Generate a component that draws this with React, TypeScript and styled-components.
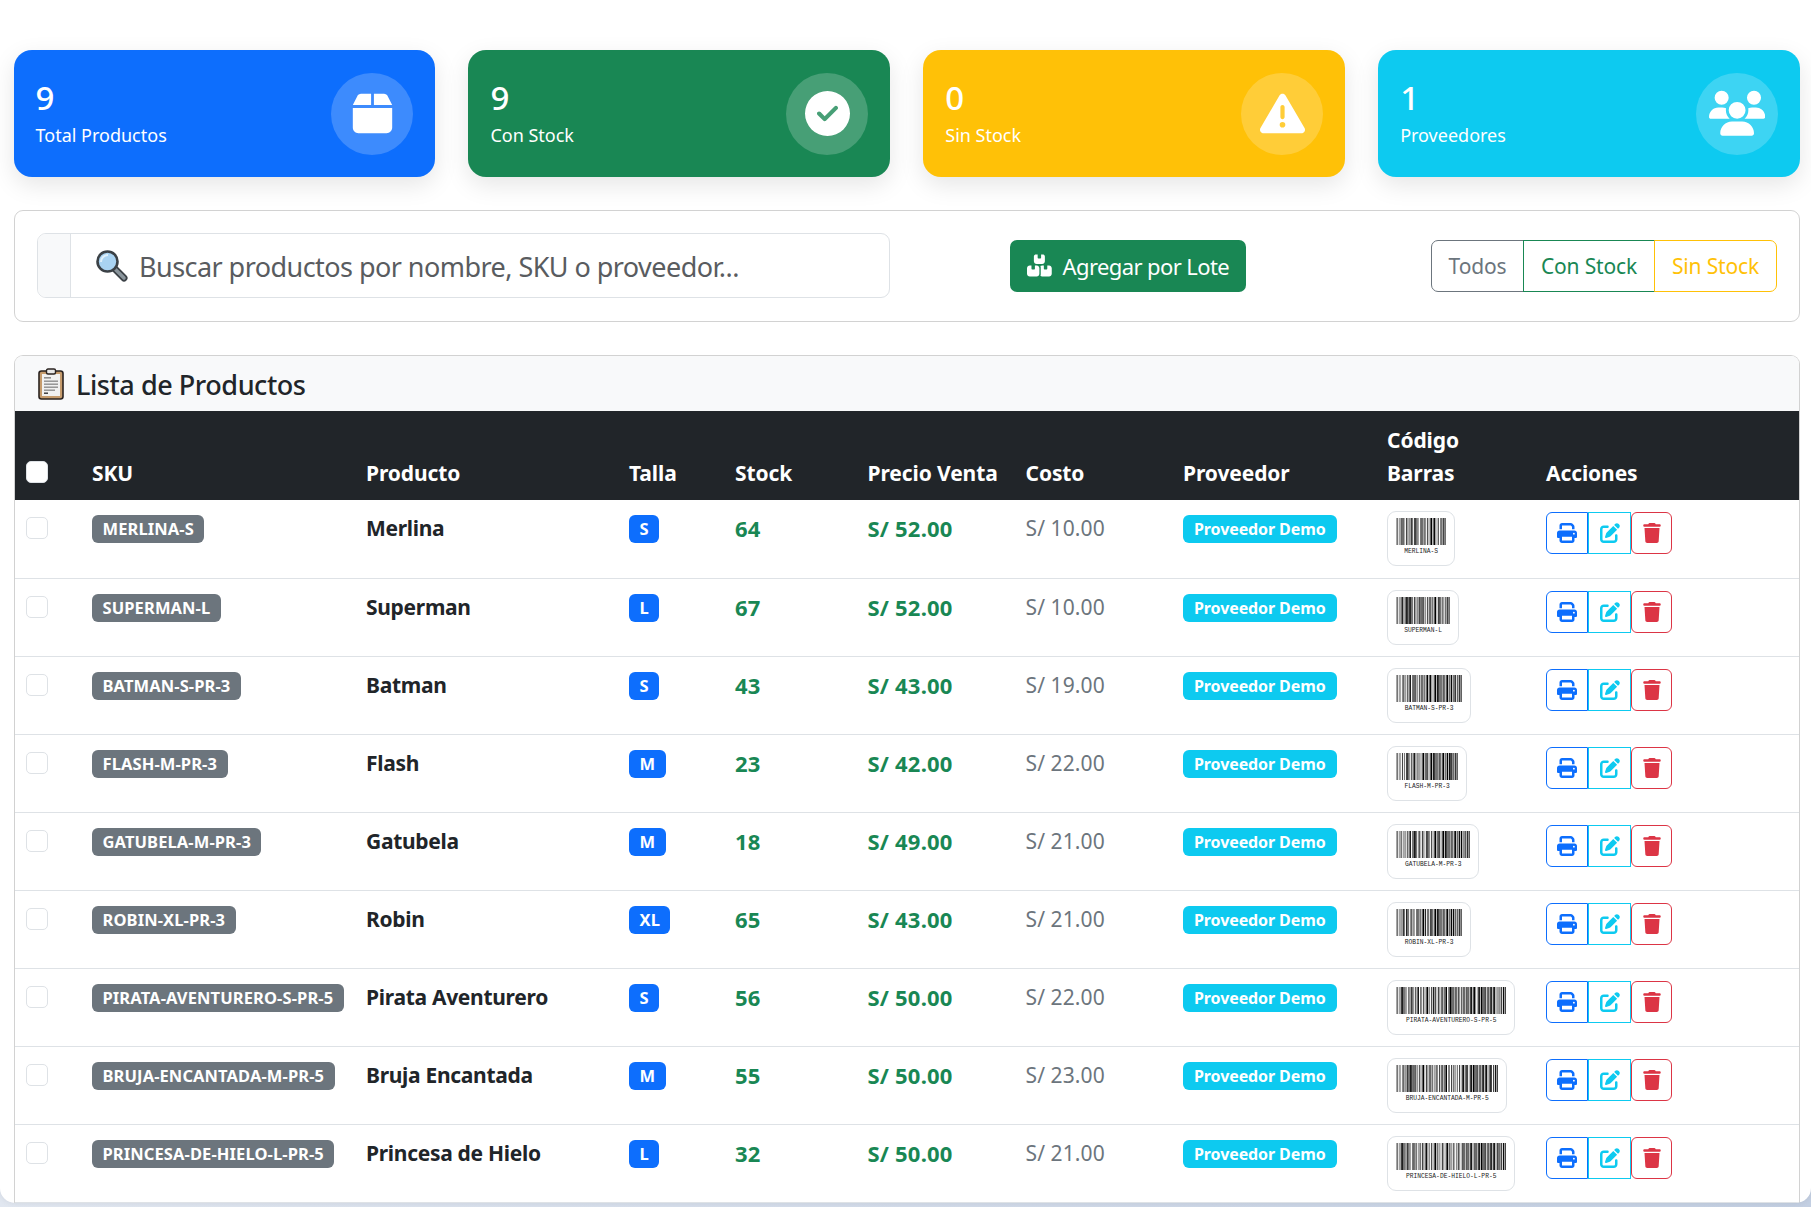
import React, { FunctionComponent } from 'react'
import styled, { createGlobalStyle } from 'styled-components'
import {
  FaBox,
  FaCircleCheck,
  FaTriangleExclamation,
  FaUsers,
  FaBoxesStacked,
  FaPrint,
  FaPenToSquare,
  FaTrash,
} from 'react-icons/fa6'

const FONT = '"Noto Sans", "Open Sans", sans-serif'

const GlobalStyle = createGlobalStyle`
  html, body {
    margin: 0;
    height: 100%;
    overflow: hidden;
    background: linear-gradient(135deg, #f5f7fa 0%, #c3cfe2 100%);
    font-family: ${FONT};
    color: #212529;
  }
  * { box-sizing: border-box; }
`

// Code 128 bar/space widths, indexed by symbol value
const CODE128 = (
  '212222 222122 222221 121223 121322 131222 122213 122312 132212 221213 221312 231212 112232 122132 122231 113222 ' +
  '123122 123221 223211 221132 221231 213212 223112 312131 311222 321122 321221 312212 322112 322211 212123 212321 ' +
  '232121 111323 131123 131321 112313 132113 132311 211313 231113 231311 112133 112331 132131 113123 113321 133121 ' +
  '313121 211331 231131 213113 213311 213131 311123 311321 331121 312113 312311 332111 314111 221411 431111 111224 ' +
  '111422 121124 121421 141122 141221 112214 112412 122114 122411 142112 142211 241211 221114 413111 241112 134111 ' +
  '111242 121142 121241 114212 124112 124211 411212 421112 421211 212141 214121 412121 111143 111341 131141 114113 ' +
  '114311 411113 411311 113141 114131 311141 411131 211412 211214 211232 2331112'
).split(' ')

function encodeBars(value: string) {
  const codes = [103]
  for (let i = 0; i < value.length; i++) {
    codes.push(value.charCodeAt(i) - 32)
  }
  const check = codes.reduce((sum, c, i) => sum + c * (i === 0 ? 1 : i), 0) % 103
  codes.push(check, 106)

  const bars: { x: number; w: number }[] = []
  let x = 0
  codes.forEach(code => {
    CODE128[code].split('').forEach((d, i) => {
      const w = Number(d)
      if (i % 2 === 0) {
        bars.push({ x, w })
      }
      x += w
    })
  })
  return { bars, modules: x }
}

const SCALE = 0.365

const Panel = styled.main`
  height: 1203px;
  overflow: hidden;
  background: #fff;
  border-radius: 0 0 15px 15px;
  box-shadow: 0 0 6px rgba(0, 0, 0, 0.08);
  padding: 50px 11px 0 14px;
`

const StatRow = styled.section`
  display: grid;
  grid-template-columns: repeat(4, 1fr);
  gap: 33px;
  margin-left: -0.5px;
`

const StatCard = styled.div<{ $bg: string }>`
  height: 127px;
  padding: 0 22px;
  border-radius: 18px;
  background: ${p => p.$bg};
  color: #fff;
  display: flex;
  align-items: center;
  justify-content: space-between;
  box-shadow: 0 8px 24px rgba(0, 0, 0, 0.1);
`

const StatValue = styled.div`
  font-size: 33px;
  font-weight: 500;
  line-height: 38px;
  margin-top: -1px;
`

const StatLabel = styled.div`
  font-size: 18px;
  line-height: 26px;
  margin-top: 5px;
`

const StatIcon = styled.div`
  width: 82px;
  height: 82px;
  border-radius: 50%;
  background: rgba(255, 255, 255, 0.2);
  display: flex;
  align-items: center;
  justify-content: center;
  font-size: 45px;
`

// fa6 glyphs wider than 512 units need a wider box than react-icons' 1em
const UsersIcon = styled(FaUsers)`
  width: 1.25em;
  height: 1.25em;
`

const StackedIcon = styled(FaBoxesStacked)`
  width: 1.125em;
  height: 1.125em;
  flex: none;
`

const FilterCard = styled.section`
  margin-top: 33px;
  height: 112px;
  border: 1px solid rgba(0, 0, 0, 0.175);
  border-radius: 9px;
  padding: 0 22px 1px 22px;
  display: flex;
  align-items: center;
`

const SearchGroup = styled.div`
  width: 853px;
  height: 65px;
  border: 1px solid #dee2e6;
  border-radius: 9px;
  display: flex;
  overflow: hidden;
`

const SearchAddon = styled.div`
  width: 33px;
  background: #f8f9fa;
  border-right: 1px solid #dee2e6;
`

const SearchField = styled.label`
  flex: 1;
  display: flex;
  align-items: center;
  gap: 8px;
  padding-left: 24px;
`

const SearchInput = styled.input`
  flex: 1;
  border: 0;
  outline: 0;
  padding: 2px 0 0 3px;
  background: none;
  font-family: ${FONT};
  font-size: 27px;
  letter-spacing: -0.55px;
  &::placeholder {
    color: #595c5f;
    opacity: 1;
  }
`

const BatchButton = styled.button`
  margin-left: 120px;
  width: 236px;
  height: 52px;
  border: 0;
  border-radius: 7px;
  background: #198754;
  color: #fff;
  font-family: ${FONT};
  font-size: 22px;
  letter-spacing: -0.6px;
  display: flex;
  align-items: center;
  justify-content: center;
  gap: 11px;
`

const FilterGroup = styled.div`
  margin-left: auto;
  display: flex;
`

const FilterButton = styled.button<{ $color: string; $w: number }>`
  width: ${p => p.$w}px;
  height: 52px;
  padding: 0;
  background: #fff;
  border: 1px solid ${p => p.$color};
  margin-left: -1px;
  color: ${p => p.$color};
  font-family: ${FONT};
  font-size: 21px;
  letter-spacing: -0.15px;
  &:first-child {
    border-radius: 7px 0 0 7px;
  }
  &:last-child {
    border-radius: 0 7px 7px 0;
  }
`

const ListCard = styled.section`
  margin-top: 33px;
  border: 1px solid rgba(0, 0, 0, 0.175);
  border-bottom: 0;
  border-radius: 9px 9px 0 0;
  overflow: hidden;
`

const ListHeader = styled.header`
  height: 55px;
  background: #f8f9fa;
  display: flex;
  align-items: center;
  gap: 12px;
  padding: 1px 0 0 23px;
  font-size: 27px;
  font-weight: 500;
  letter-spacing: -0.45px;
`

const Table = styled.table`
  width: 100%;
  table-layout: fixed;
  border-collapse: collapse;
  font-size: 21px;
  line-height: 33px;
`

const Col = styled.col<{ $w: number }>`
  width: ${p => p.$w}px;
`

const HeadCell = styled.th`
  background: #212529;
  color: #fff;
  text-align: left;
  vertical-align: bottom;
  font-weight: 700;
  padding: 13px 12px 10px;
  letter-spacing: -0.1px;
`

const Row = styled.tr`
  height: 78px;
  border-bottom: 1px solid #dee2e6;
`

const Cell = styled.td`
  vertical-align: top;
  padding: 12px 12px 0;
  white-space: nowrap;
`

const NameCell = styled(Cell)`
  font-weight: 700;
  letter-spacing: -0.3px;
`

const AmountCell = styled(Cell)`
  color: #198754;
  font-size: 22px;
  font-weight: 700;
  letter-spacing: 0.2px;
`

const CostCell = styled(Cell)`
  color: #6c757d;
  letter-spacing: 0.1px;
`

const Check = styled.input.attrs({ type: 'checkbox' })<{ $light?: boolean }>`
  appearance: none;
  display: block;
  width: 22px;
  height: 22px;
  margin: ${p => (p.$light ? '0 0 7px -1px' : '5px 0 0 -1px')};
  border: 1px solid #dee2e6;
  border-radius: 5px;
  background: #fff;
`

const Badge = styled.span<{ $bg: string; $narrow?: boolean }>`
  display: inline-block;
  height: 28px;
  padding: 0 ${p => (p.$narrow ? '11px' : '10.5px')};
  border-radius: 6px;
  background: ${p => p.$bg};
  color: #fff;
  font-size: ${p => (p.$narrow ? '16px' : '16.5px')};
  font-weight: 700;
  line-height: 28px;
  letter-spacing: ${p => (p.$narrow ? '-0.1px' : '0.1px')};
  vertical-align: 1px;
`

const BarcodeBox = styled.div`
  display: inline-block;
  margin-top: -1px;
  padding: 5px;
  border: 1px solid #dee2e6;
  border-radius: 9px;
  line-height: 0;
  background: #fff;
`

const Actions = styled.div`
  display: flex;
`

const ActionButton = styled.button<{ $color: string; $w: number; $radius: string }>`
  width: ${p => p.$w}px;
  height: 42px;
  padding: 0;
  display: flex;
  align-items: center;
  justify-content: center;
  background: #fff;
  border: 1px solid ${p => p.$color};
  border-radius: ${p => p.$radius};
  color: ${p => p.$color};
  font-size: 20px;
`

const Barcode: FunctionComponent<{ value: string }> = ({ value }) => {
  const { bars, modules } = encodeBars(value)
  const width = (modules + 20) * SCALE

  return (
    <svg width={width} height={43} viewBox={`0 0 ${width} 43`}>
      {bars.map(bar => (
        <rect
          key={bar.x}
          x={(bar.x + 10) * SCALE}
          y={1}
          width={bar.w * SCALE}
          height={27}
          fill="#000"
        />
      ))}
      <text
        x={width / 2}
        y={36.5}
        textAnchor="middle"
        fontFamily='"Liberation Mono", monospace'
        fontSize={6.3}
        fill="#222"
      >
        {value}
      </text>
    </svg>
  )
}

const MagnifierIcon = () => (
  <svg width="33" height="33" viewBox="0 0 33 33">
    <line x1="19" y1="19" x2="29" y2="29" stroke="#3b4146" strokeWidth="7" strokeLinecap="round" />
    <line x1="20" y1="20" x2="29" y2="29" stroke="#8a959c" strokeWidth="3.5" strokeLinecap="round" />
    <circle cx="12.5" cy="12.5" r="10" fill="#a9d3f2" stroke="#3b4146" strokeWidth="2.6" />
    <path d="M6 13a7 7 0 0 1 7-7" stroke="#dff0fb" strokeWidth="2" fill="none" />
  </svg>
)

const ClipboardIcon = () => (
  <svg width="26" height="32" viewBox="0 0 26 32">
    <rect x="1" y="3" width="24" height="28" rx="2.5" fill="#c69c6d" stroke="#2a2320" strokeWidth="1.6" />
    <rect x="4" y="6" width="18" height="22" fill="#f1f1f1" />
    <rect x="8.5" y="1" width="9" height="5" rx="1.5" fill="#e8e8e8" stroke="#2a2320" strokeWidth="1.4" />
    <rect x="6" y="9" width="7" height="1.6" fill="#8e8e8e" />
    <rect x="6" y="12.5" width="14" height="1.4" fill="#8e8e8e" />
    <rect x="6" y="15.5" width="14" height="1.4" fill="#8e8e8e" />
    <rect x="6" y="18.5" width="14" height="1.4" fill="#8e8e8e" />
    <rect x="6" y="21.5" width="11" height="1.4" fill="#8e8e8e" />
    <rect x="6" y="24.5" width="4" height="1.4" fill="#333" />
  </svg>
)

const COLUMNS = [65, 274, 263, 106, 132.5, 158, 157.5, 204, 159, 265]

const PRODUCTS = [
  { sku: 'MERLINA-S', name: 'Merlina', size: 'S', stock: 64, price: '52.00', cost: '10.00' },
  { sku: 'SUPERMAN-L', name: 'Superman', size: 'L', stock: 67, price: '52.00', cost: '10.00' },
  { sku: 'BATMAN-S-PR-3', name: 'Batman', size: 'S', stock: 43, price: '43.00', cost: '19.00' },
  { sku: 'FLASH-M-PR-3', name: 'Flash', size: 'M', stock: 23, price: '42.00', cost: '22.00' },
  { sku: 'GATUBELA-M-PR-3', name: 'Gatubela', size: 'M', stock: 18, price: '49.00', cost: '21.00' },
  { sku: 'ROBIN-XL-PR-3', name: 'Robin', size: 'XL', stock: 65, price: '43.00', cost: '21.00' },
  { sku: 'PIRATA-AVENTURERO-S-PR-5', name: 'Pirata Aventurero', size: 'S', stock: 56, price: '50.00', cost: '22.00' },
  { sku: 'BRUJA-ENCANTADA-M-PR-5', name: 'Bruja Encantada', size: 'M', stock: 55, price: '50.00', cost: '23.00' },
  { sku: 'PRINCESA-DE-HIELO-L-PR-5', name: 'Princesa de Hielo', size: 'L', stock: 32, price: '50.00', cost: '21.00' },
]

const App: FunctionComponent = () => {
  return (
    <Panel>
      <GlobalStyle />
      <StatRow>
        <StatCard $bg="#0d6efd">
          <div>
            <StatValue>9</StatValue>
            <StatLabel>Total Productos</StatLabel>
          </div>
          <StatIcon>
            <FaBox />
          </StatIcon>
        </StatCard>
        <StatCard $bg="#198754">
          <div>
            <StatValue>9</StatValue>
            <StatLabel>Con Stock</StatLabel>
          </div>
          <StatIcon>
            <FaCircleCheck />
          </StatIcon>
        </StatCard>
        <StatCard $bg="#ffc107">
          <div>
            <StatValue>0</StatValue>
            <StatLabel>Sin Stock</StatLabel>
          </div>
          <StatIcon>
            <FaTriangleExclamation />
          </StatIcon>
        </StatCard>
        <StatCard $bg="#0dcaf0">
          <div>
            <StatValue>1</StatValue>
            <StatLabel>Proveedores</StatLabel>
          </div>
          <StatIcon>
            <UsersIcon />
          </StatIcon>
        </StatCard>
      </StatRow>

      <FilterCard>
        <SearchGroup>
          <SearchAddon />
          <SearchField>
            <MagnifierIcon />
            <SearchInput placeholder="Buscar productos por nombre, SKU o proveedor..." />
          </SearchField>
        </SearchGroup>
        <BatchButton>
          <StackedIcon />
          Agregar por Lote
        </BatchButton>
        <FilterGroup>
          <FilterButton $color="#6c757d" $w={93}>Todos</FilterButton>
          <FilterButton $color="#198754" $w={132}>Con Stock</FilterButton>
          <FilterButton $color="#ffc107" $w={123}>Sin Stock</FilterButton>
        </FilterGroup>
      </FilterCard>

      <ListCard>
        <ListHeader>
          <ClipboardIcon />
          Lista de Productos
        </ListHeader>
        <Table>
          <colgroup>
            {COLUMNS.map((w, i) => (
              <Col key={i} $w={w} />
            ))}
          </colgroup>
          <thead>
            <tr>
              <HeadCell>
                <Check $light />
              </HeadCell>
              <HeadCell>SKU</HeadCell>
              <HeadCell>Producto</HeadCell>
              <HeadCell>Talla</HeadCell>
              <HeadCell>Stock</HeadCell>
              <HeadCell>Precio Venta</HeadCell>
              <HeadCell>Costo</HeadCell>
              <HeadCell>Proveedor</HeadCell>
              <HeadCell>
                Código
                <br />
                Barras
              </HeadCell>
              <HeadCell>Acciones</HeadCell>
            </tr>
          </thead>
          <tbody>
            {PRODUCTS.map(p => (
              <Row key={p.sku}>
                <Cell>
                  <Check />
                </Cell>
                <Cell>
                  <Badge $bg="#6c757d">{p.sku}</Badge>
                </Cell>
                <NameCell>{p.name}</NameCell>
                <Cell>
                  <Badge $bg="#0d6efd">{p.size}</Badge>
                </Cell>
                <AmountCell>{p.stock}</AmountCell>
                <AmountCell>S/ {p.price}</AmountCell>
                <CostCell>S/ {p.cost}</CostCell>
                <Cell>
                  <Badge $bg="#0dcaf0" $narrow>Proveedor Demo</Badge>
                </Cell>
                <Cell>
                  <BarcodeBox>
                    <Barcode value={p.sku} />
                  </BarcodeBox>
                </Cell>
                <Cell>
                  <Actions>
                    <ActionButton $color="#0d6efd" $w={42} $radius="6px 0 0 6px">
                      <FaPrint />
                    </ActionButton>
                    <ActionButton $color="#0dcaf0" $w={43} $radius="0">
                      <FaPenToSquare />
                    </ActionButton>
                    <ActionButton $color="#dc3545" $w={41} $radius="6px">
                      <FaTrash />
                    </ActionButton>
                  </Actions>
                </Cell>
              </Row>
            ))}
          </tbody>
        </Table>
      </ListCard>
    </Panel>
  )
}

export default App
